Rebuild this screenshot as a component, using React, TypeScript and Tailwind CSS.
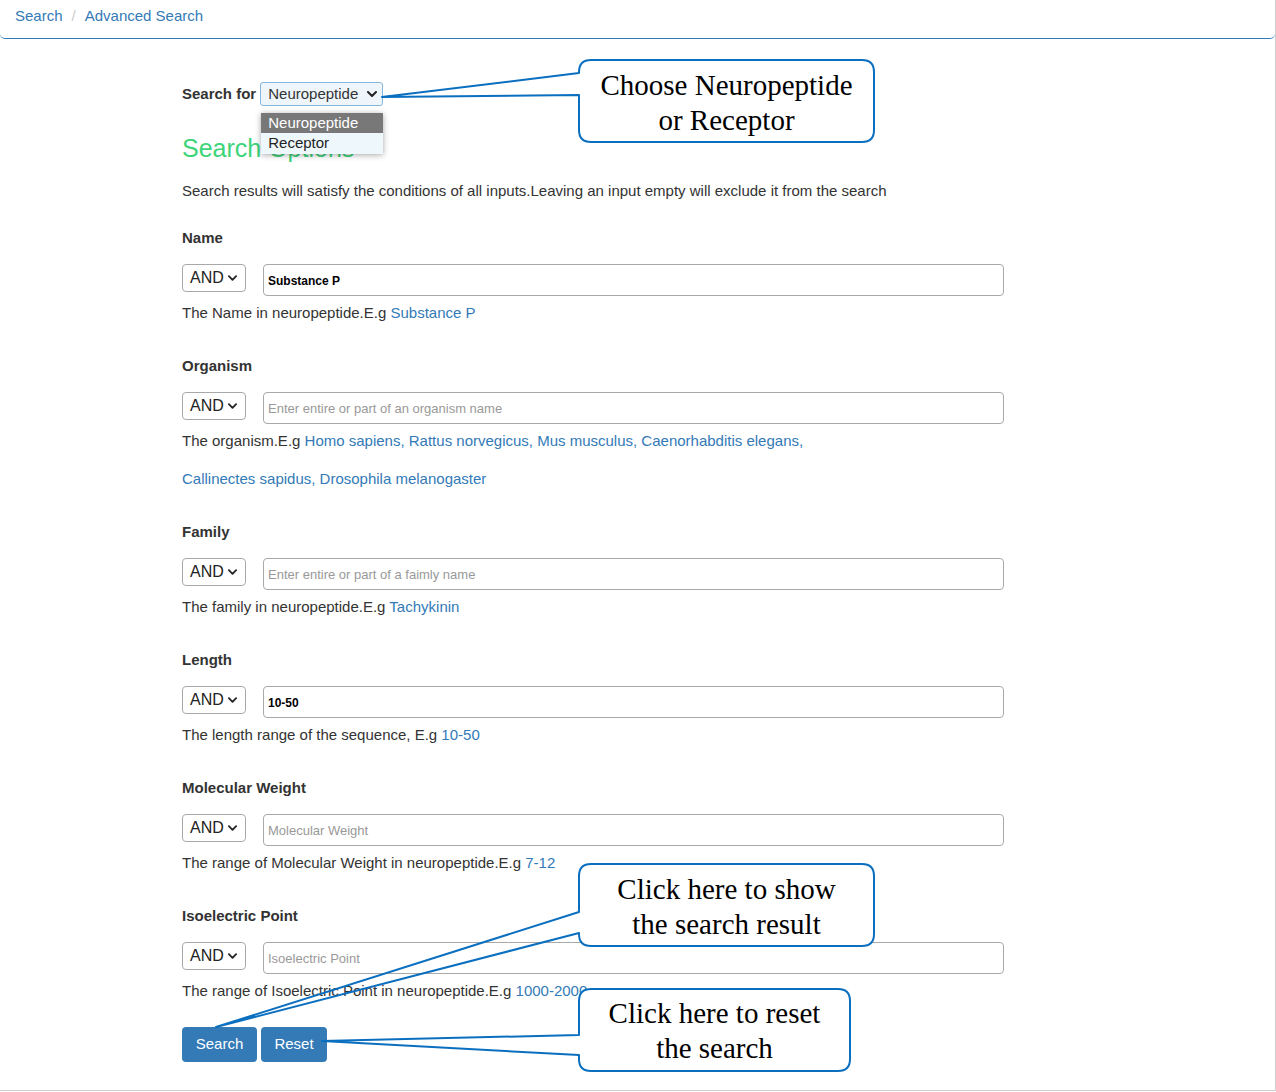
import React from "react";

const Chevron = ({ className }: { className?: string }) => (
  <svg viewBox="0 0 10 6" className={className} fill="none">
    <path d="M1 1 L5 5 L9 1" stroke="#222" strokeWidth="2" strokeLinecap="round" strokeLinejoin="round" />
  </svg>
);

const AndSelect = () => (
  <div className="w-16 h-7 shrink-0 border border-[#a9a9a9] rounded-[4px] flex items-center pl-[7px] pr-[8px] justify-between text-[16px] text-[#222]">
    <span>AND</span>
    <Chevron className="w-[9px] h-[6px]" />
  </div>
);

type FieldProps = {
  label: string;
  value?: string;
  placeholder?: string;
  help: React.ReactNode;
};

const Field = ({ label, value, placeholder, help }: FieldProps) => (
  <div className="mb-[33px]">
    <div className="h-5 leading-5 font-bold text-[15px] text-[#333]">{label}</div>
    <div className="mt-4 flex items-start gap-[17px]">
      <AndSelect />
      <div className="flex-1 h-8 border border-[#a9a9a9] rounded-[4px] flex items-center pl-[4px] pt-[1px] text-[12px]">
        {value ? (
          <span className="font-bold text-black">{value}</span>
        ) : (
          <span className="text-[13px] text-[#999]">{placeholder}</span>
        )}
      </div>
    </div>
    <div className="mt-[7px] leading-5 text-[15px] text-[#333]">{help}</div>
  </div>
);

const L = ({ children }: { children: React.ReactNode }) => <span className="text-[#337ab7]">{children}</span>;

export default function App() {
  return (
    <div className="relative w-[1276px] h-[1091px] bg-white border-r border-b border-[#cfcfcf] font-['Liberation_Sans',Arial,sans-serif] text-[#333]">
      {/* breadcrumb */}
      <div className="h-[39px] border-b border-[#337ab7] rounded-b-[5px] pl-[15px] flex items-start pt-[6px] text-[15px] leading-5">
        <span className="text-[#337ab7]">Search</span>
        <span className="text-[#ccc] px-[9px]">/</span>
        <span className="text-[#337ab7]">Advanced Search</span>
      </div>

      <div className="ml-[182px] w-[822px]">
        {/* search for */}
        <div className="mt-[43px] flex items-center h-6">
          <span className="font-bold text-[15px] mr-[4px]">Search for</span>
          <div className="relative">
            <div className="w-[123px] h-6 border border-[#86b7dd] bg-[#eef6fc] rounded-[3px] flex items-center justify-between pl-[7px] pr-[5px] text-[15px] text-[#333]">
              <span>Neuropeptide</span>
              <Chevron className="w-[10px] h-[6px]" />
            </div>
            <div className="absolute left-[1px] top-[31px] w-[122px] z-10 shadow-[0_1px_6px_rgba(0,0,0,0.35)] text-[15px] leading-5">
              <div className="bg-[#787878] text-white pl-[7px] h-5">Neuropeptide</div>
              <div className="bg-[#eef7fc] text-[#222] pl-[7px] h-[21px]">Receptor</div>
            </div>
          </div>
        </div>

        <h2 className="mt-[27px] h-[30px] leading-[30px] text-[25px] text-[#3dd47a]">Search Options</h2>
        <p className="mt-[18px] leading-5 text-[15px]">
          Search results will satisfy the conditions of all inputs.Leaving an input empty will exclude it from the search
        </p>

        <div className="mt-[27px]">
          <Field
            label="Name"
            value="Substance P"
            help={
              <>
                The Name in neuropeptide.E.g <L>Substance P</L>
              </>
            }
          />
          <Field
            label="Organism"
            placeholder="Enter entire or part of an organism name"
            help={
              <>
                <div>
                  The organism.E.g <L>Homo sapiens, Rattus norvegicus, Mus musculus, Caenorhabditis elegans,</L>
                </div>
                <div className="mt-[18px]">
                  <L>Callinectes sapidus, Drosophila melanogaster</L>
                </div>
              </>
            }
          />
          <Field
            label="Family"
            placeholder="Enter entire or part of a faimly name"
            help={
              <>
                The family in neuropeptide.E.g <L>Tachykinin</L>
              </>
            }
          />
          <Field
            label="Length"
            value="10-50"
            help={
              <>
                The length range of the sequence, E.g <L>10-50</L>
              </>
            }
          />
          <Field
            label="Molecular Weight"
            placeholder="Molecular Weight"
            help={
              <>
                The range of Molecular Weight in neuropeptide.E.g <L>7-12</L>
              </>
            }
          />
          <div>
            <div className="h-5 leading-5 font-bold text-[15px]">Isoelectric Point</div>
            <div className="mt-4 flex items-start gap-[17px]">
              <AndSelect />
              <div className="flex-1 h-8 border border-[#a9a9a9] rounded-[4px] flex items-center pl-[4px] pt-[1px] text-[13px] text-[#999]">
                Isoelectric Point
              </div>
            </div>
            <div className="mt-[7px] leading-5 text-[15px]">
              The range of Isoelectric Point in neuropeptide.E.g <L>1000-2000</L>
            </div>
          </div>

          <div className="mt-[26px] flex gap-[4px]">
            <button className="w-[75px] h-[35px] bg-[#337ab7] text-white text-[15px] rounded-[4px]">Search</button>
            <button className="w-[66px] h-[35px] bg-[#337ab7] text-white text-[15px] rounded-[4px]">Reset</button>
          </div>
        </div>
      </div>

      {/* annotation callouts */}
      <svg className="absolute inset-0 pointer-events-none z-20" width="1276" height="1092">
        <rect x="579" y="60" width="295" height="82" rx="12" fill="white" />
        <path
          d="M591 60 H862 Q874 60 874 72 V130 Q874 142 862 142 H591 Q579 142 579 130 V95 L382 97 L579 73 V72 Q579 60 591 60 Z"
          fill="none"
          stroke="#0b6fc0"
          strokeWidth="2"
          strokeLinejoin="round"
        />
        <rect x="579" y="864" width="295" height="82" rx="12" fill="white" />
        <path
          d="M591 864 H862 Q874 864 874 876 V934 Q874 946 862 946 H591 Q579 946 579 934 V933 L216 1027 L579 912 V876 Q579 864 591 864 Z"
          fill="none"
          stroke="#0b6fc0"
          strokeWidth="2"
          strokeLinejoin="round"
        />
        <rect x="579" y="989" width="271" height="82" rx="12" fill="white" />
        <path
          d="M591 989 H838 Q850 989 850 1001 V1059 Q850 1071 838 1071 H591 Q579 1071 579 1059 V1055 L322 1041 L579 1035 V1001 Q579 989 591 989 Z"
          fill="none"
          stroke="#0b6fc0"
          strokeWidth="2"
          strokeLinejoin="round"
        />
      </svg>
      <div className="absolute left-[579px] top-[60px] w-[295px] h-[82px] z-30 pt-[4px] flex flex-col items-center justify-center font-['Liberation_Serif',serif] text-[29px] leading-[35px] text-black">
        <span>Choose Neuropeptide</span>
        <span>or Receptor</span>
      </div>
      <div className="absolute left-[579px] top-[864px] w-[295px] h-[82px] z-30 pt-[4px] flex flex-col items-center justify-center font-['Liberation_Serif',serif] text-[29px] leading-[35px] text-black">
        <span>Click here to show</span>
        <span>the search result</span>
      </div>
      <div className="absolute left-[579px] top-[989px] w-[271px] h-[82px] z-30 pt-[2px] flex flex-col items-center justify-center font-['Liberation_Serif',serif] text-[29px] leading-[35px] text-black">
        <span>Click here to reset</span>
        <span>the search</span>
      </div>
    </div>
  );
}
